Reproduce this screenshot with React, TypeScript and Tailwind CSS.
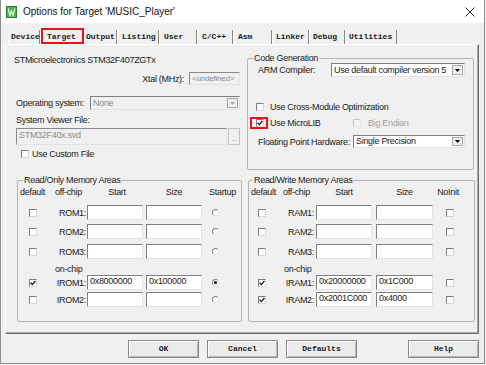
import React from 'react';

const sans = "font-['Liberation_Sans',Arial,sans-serif] text-[9px] tracking-[-0.3px] leading-[12px] text-[#1b1b1b]";
const mono = "font-['Liberation_Mono','Courier_New',monospace] text-[8px] font-bold tracking-[0px] text-[#1a1a1a]";

const Check = ({ checked = false, disabled = false }: { checked?: boolean; disabled?: boolean }) => (
  <span
    className={
      disabled
        ? 'flex h-[8px] w-[8px] shrink-0 items-center justify-center border border-t-[#c2c2c2] border-l-[#c2c2c2] border-r-[#e6e6e6] border-b-[#e6e6e6] bg-[#f3f3f3]'
        : 'flex h-[8px] w-[8px] shrink-0 items-center justify-center border border-t-[#7d7d7d] border-l-[#7d7d7d] border-r-[#d6d6d6] border-b-[#d6d6d6] bg-white'
    }
  >
    {checked && (
      <svg width="6" height="6" viewBox="0 0 6 6">
        <path d="M0.6 2.8 L2.3 4.6 L5.4 1" stroke="#111" strokeWidth="1.3" fill="none" />
      </svg>
    )}
  </span>
);

const Radio = ({ on = false }: { on?: boolean }) => (
  <span className="flex h-[7px] w-[7px] shrink-0 items-center justify-center rounded-full border border-t-[#808080] border-l-[#808080] border-r-[#e2e2e2] border-b-[#e2e2e2] bg-white">
    {on && <span className="h-[3px] w-[3px] rounded-full bg-black" />}
  </span>
);

const Field = ({ value = '', className = '' }: { value?: string; className?: string }) => (
  <div
    className={`h-[15px] shrink-0 border border-t-[#7f7f7f] border-l-[#7f7f7f] border-r-[#e3e3e3] border-b-[#e3e3e3] bg-white pl-[2px] leading-[11px] ${className}`}
  >
    {value}
  </div>
);

const Arrow = ({ disabled = false }: { disabled?: boolean }) => (
  <span className="m-[1px] flex w-[11px] items-center justify-center border border-[#a8a8a8] bg-[#eeeeee]">
    <svg width="5" height="3" viewBox="0 0 5 3">
      <path d="M0 0h5L2.5 3z" fill={disabled ? '#a6a6a6' : '#000'} />
    </svg>
  </span>
);

const Select = ({ value, className, disabled = false }: { value: string; className: string; disabled?: boolean }) => (
  <div
    className={`flex shrink-0 border border-t-[#7f7f7f] border-l-[#7f7f7f] border-r-[#e3e3e3] border-b-[#e3e3e3] ${disabled ? 'bg-[#f0f0f0] text-[#8c8c8c]' : 'bg-white'} ${className}`}
  >
    <span className="flex-1 pl-[2px] leading-[11px] self-center">{value}</span>
    <Arrow disabled={disabled} />
  </div>
);

const tabs = [
  { label: 'Device', cls: 'w-[32px] pl-[2px]' },
  { label: 'Target', cls: 'w-[44px] pl-[6px]' },
  { label: 'Output', cls: 'w-[33px] pl-[1px]' },
  { label: 'Listing', cls: 'w-[42px] pl-[4px]' },
  { label: 'User', cls: 'w-[38px] pl-[4px]' },
  { label: 'C/C++', cls: 'w-[36px] pl-[4px]' },
  { label: 'Asm', cls: 'w-[39px] pl-[4px]' },
  { label: 'Linker', cls: 'w-[37px] pl-[3px]' },
  { label: 'Debug', cls: 'w-[36px] pl-[3px]' },
  { label: 'Utilities', cls: 'w-[52px] pl-[3px]' },
];

type Row = { label: string; on?: boolean; start?: string; size?: string; radio?: boolean; mt: string };

const romRows: Row[] = [
  { label: 'ROM1:', mt: 'mt-[7px]' },
  { label: 'ROM2:', mt: 'mt-[4px]' },
  { label: 'ROM3:', mt: 'mt-[5px]' },
  { label: 'IROM1:', on: true, start: '0x8000000', size: '0x100000', radio: true, mt: 'mt-0' },
  { label: 'IROM2:', mt: 'mt-[2px]' },
];

const ramRows: Row[] = [
  { label: 'RAM1:', mt: 'mt-[7px]' },
  { label: 'RAM2:', mt: 'mt-[4px]' },
  { label: 'RAM3:', mt: 'mt-[5px]' },
  { label: 'IRAM1:', on: true, start: '0x20000000', size: '0x1C000', mt: 'mt-0' },
  { label: 'IRAM2:', on: true, start: '0x2001C000', size: '0x4000', mt: 'mt-[2px]' },
];

const RomGroup = () => (
  <fieldset className="ml-[11px] h-[148px] w-[225px] rounded-[2px] border border-[#b4b4b4] px-0">
    <legend className="ml-[5px] px-[1px] leading-[12px]">Read/Only Memory Areas</legend>
    <div className="flex h-[12px] items-center">
      <span className="w-[29px] text-center">default</span>
      <span className="w-[40px] pl-[8px]">off-chip</span>
      <span className="w-[56px] pl-[4px] text-center">Start</span>
      <span className="ml-[3px] w-[56px] text-center">Size</span>
      <span className="w-[37px] pl-[4px] text-center">Startup</span>
    </div>
    {romRows.map((r, i) => (
      <React.Fragment key={r.label}>
        {i === 3 && <div className="mt-[4px] h-[12px] pl-[37px]">on-chip</div>}
        <div className={`flex h-[15px] items-center ${r.mt}`}>
          <span className="flex w-[29px] justify-center pl-[1px]">
            <Check checked={r.on} />
          </span>
          <span className="w-[40px] pr-[1px] text-right">{r.label}</span>
          <Field value={r.start} className="w-[56px]" />
          <Field value={r.size} className="ml-[3px] w-[56px]" />
          <span className="ml-[10px] flex">
            <Radio on={r.radio} />
          </span>
        </div>
      </React.Fragment>
    ))}
  </fieldset>
);

const RamGroup = () => (
  <fieldset className="ml-[6px] h-[148px] w-[227px] rounded-[2px] border border-[#b4b4b4] px-0">
    <legend className="ml-[4px] px-[1px] leading-[12px]">Read/Write Memory Areas</legend>
    <div className="flex h-[12px] items-center">
      <span className="w-[27px] pl-[2px] text-center">default</span>
      <span className="w-[40px] pl-[7px]">off-chip</span>
      <span className="w-[56px] text-center">Start</span>
      <span className="ml-[4px] w-[57px] text-center">Size</span>
      <span className="w-[30px] text-center">NoInit</span>
    </div>
    {ramRows.map((r, i) => (
      <React.Fragment key={r.label}>
        {i === 3 && <div className="mt-[4px] h-[12px] pl-[35px]">on-chip</div>}
        <div className={`flex h-[15px] items-center ${r.mt}`}>
          <span className="flex w-[27px] justify-center pr-[1px]">
            <Check checked={r.on} />
          </span>
          <span className="w-[40px] pr-[2px] text-right">{r.label}</span>
          <Field value={r.start} className="w-[56px]" />
          <Field value={r.size} className="ml-[4px] w-[57px]" />
          <span className="ml-[13px] flex">
            <Check />
          </span>
        </div>
      </React.Fragment>
    ))}
  </fieldset>
);

const Btn = ({ label, className = '' }: { label: string; className?: string }) => (
  <button
    className={`flex h-[18px] w-[71px] items-center justify-center border border-[#8a8a8a] bg-[#ebebeb] shadow-[inset_1px_1px_0_#ffffff,inset_-1px_-1px_0_#b4b4b4] ${mono} ${className}`}
  >
    {label}
  </button>
);

export default function App() {
  return (
    <div className="h-[365px] w-[486px] overflow-hidden bg-[#f0f0f0]">
      <div className={`flex h-[364px] w-[485px] flex-col border-x border-b border-[#8e8e8e] bg-[#f0f0f0] ${sans}`}>
        {/* title bar */}
        <div className="flex h-[23px] shrink-0 items-center bg-white">
          <svg className="ml-[5px]" width="11" height="12" viewBox="0 0 11 12">
            <rect x="0" y="0" width="11" height="12" fill="#2e7d32" />
            <rect x="1" y="1" width="9" height="10" fill="#4caf50" />
            <path d="M2.2 2.5 L4 9.5 L5.5 5 L7 9.5 L8.8 2.5" stroke="#eaffea" strokeWidth="1.1" fill="none" />
          </svg>
          <span className="ml-[6px] text-[10px] leading-[12px] tracking-[0px] text-[#111]">Options for Target 'MUSIC_Player'</span>
          <svg className="ml-auto mr-[9px]" width="10" height="10" viewBox="0 0 10 10">
            <path d="M0.5 0.5 L9.5 9.5 M9.5 0.5 L0.5 9.5" stroke="#333" strokeWidth="1" />
          </svg>
        </div>

        {/* tabs */}
        <div className="mt-[5px] flex h-[16px] items-end pl-[7px]">
          {tabs.map((t) => (
            <div
              key={t.label}
              className={`relative flex h-[14px] items-center border-l border-r border-l-white border-r-[#888888] ${mono} ${t.cls}`}
            >
              {t.label}
              {t.label === 'Target' && (
                <span className="absolute -top-[2px] left-0 h-[16px] w-[43px] border-2 border-[#e5141c]" />
              )}
            </div>
          ))}
        </div>

        {/* tab panel */}
        <div className="ml-[4px] flex h-[290px] w-[474px] flex-col border border-t-white border-l-white border-r-[#6e6e6e] border-b-[#6e6e6e] shadow-[inset_-1px_-1px_0_#a8a8a8]">
          <div className="flex">
            <div className="flex w-[235px] flex-col">
              <div className="pl-[8px] pt-[9px]">STMicroelectronics STM32F407ZGTx</div>
              <div className="mt-[6px] flex items-center justify-end pr-[1px]">
                <span className="mr-[5px]">Xtal (MHz):</span>
                <div className="h-[13px] w-[51px] border border-t-[#8a8a8a] border-l-[#8a8a8a] border-r-[#e3e3e3] border-b-[#e3e3e3] pl-[2px] text-[8px] leading-[11px] tracking-[-0.2px] text-[#8c8c8c]">
                  &lt;undefined&gt;
                </div>
              </div>
              <div className="mt-[11px] flex items-center pl-[10px]">
                <span className="w-[74px]">Operating system:</span>
                <Select value="None" className="h-[14px] w-[150px]" disabled />
              </div>
              <div className="mt-[4px] pl-[10px]">System Viewer File:</div>
              <div className="mt-[2px] flex pl-[10px]">
                <div className="h-[17px] w-[211px] border border-t-[#8a8a8a] border-l-[#8a8a8a] border-r-[#e3e3e3] border-b-[#e3e3e3] pl-[2px] leading-[13px] text-[#8c8c8c]">
                  STM32F40x.svd
                </div>
                <div className="ml-[1px] flex h-[17px] w-[12px] items-end justify-center border border-[#c3c3c3] pb-[2px] text-[7px] leading-[7px] text-[#9a9a9a]">
                  ...
                </div>
              </div>
              <div className="mt-[3px] flex h-[12px] items-center pl-[15px]">
                <Check />
                <span className="ml-[3px]">Use Custom File</span>
              </div>
            </div>

            <fieldset className="ml-[6px] mt-[7px] h-[118px] w-[227px] rounded-[2px] border border-[#b4b4b4] px-0">
              <legend className="ml-[5px] px-[1px] leading-[12px]">Code Generation</legend>
              <div className="-mt-[1px] flex items-center pl-[10px]">
                <span className="w-[73px]">ARM Compiler:</span>
                <Select value="Use default compiler version 5" className="h-[14px] w-[134px]" />
              </div>
              <div className="mt-[24px] flex h-[12px] items-center pl-[8px]">
                <Check />
                <span className="ml-[6px]">Use Cross-Module Optimization</span>
              </div>
              <div className="mt-[4px] flex h-[12px] items-center pl-[8px]">
                <div className="flex w-[97px] items-center">
                  <span className="relative flex">
                    <Check checked />
                    <span className="absolute -left-[6px] -top-[2px] h-[12px] w-[18px] border-2 border-[#e5141c]" />
                  </span>
                  <span className="ml-[6px]">Use MicroLIB</span>
                </div>
                <Check disabled />
                <span className="ml-[7px] text-[#a0a0a0]">Big Endian</span>
              </div>
              <div className="mt-[6px] flex items-center pl-[10px]">
                <span className="w-[95px]">Floating Point Hardware:</span>
                <Select value="Single Precision" className="h-[13px] w-[112px]" />
              </div>
            </fieldset>
          </div>

          <div className="mt-[4px] flex">
            <RomGroup />
            <RamGroup />
          </div>
        </div>

        {/* buttons */}
        <div className="mt-[6px] flex pl-[127px]">
          <Btn label="OK" />
          <Btn label="Cancel" className="ml-[8px]" />
          <Btn label="Defaults" className="ml-[8px]" />
          <Btn label="Help" className="ml-[51px]" />
        </div>
      </div>
    </div>
  );
}
